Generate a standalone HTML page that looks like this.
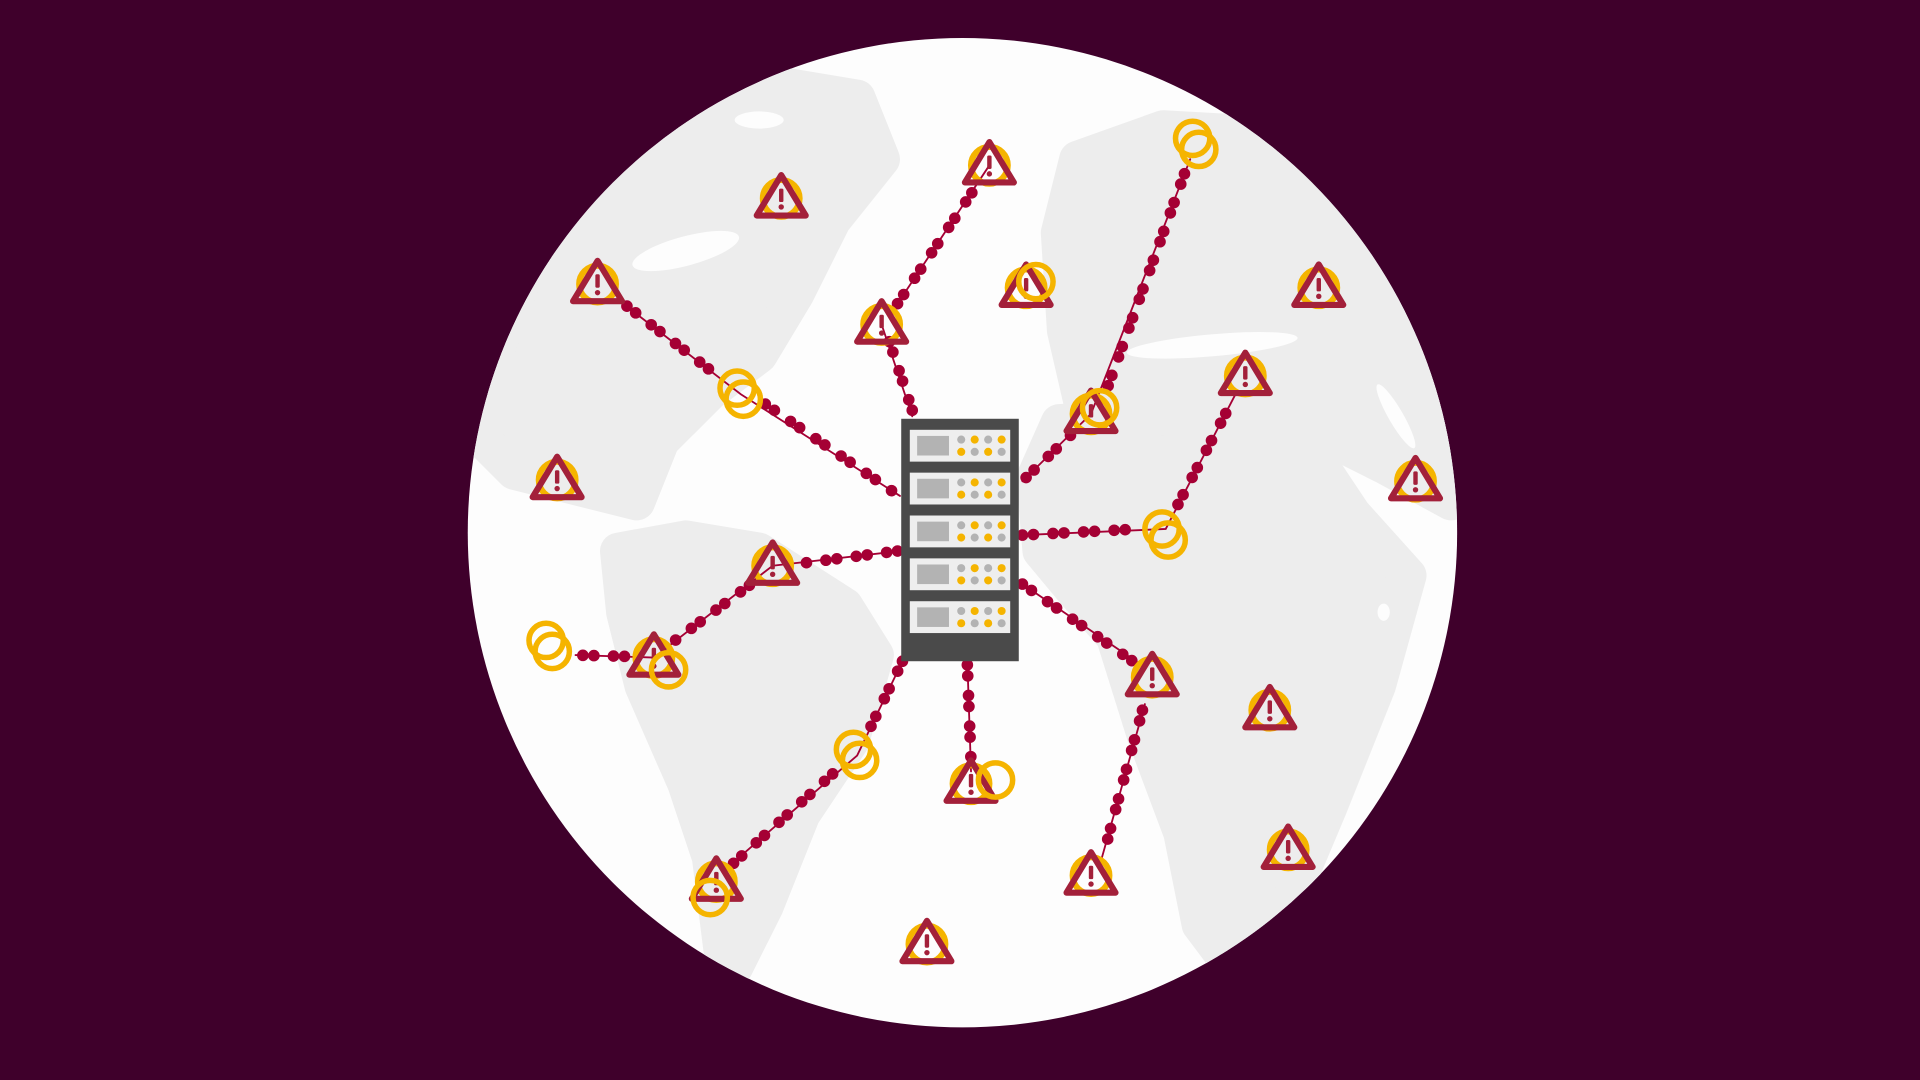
<!DOCTYPE html>
<html><head><meta charset="utf-8"><style>
html,body{margin:0;padding:0;width:1920px;height:1080px;overflow:hidden;background:#3f002b}
svg{display:block}
</style></head><body>
<svg width="1920" height="1080" viewBox="0 0 1568 882" xmlns="http://www.w3.org/2000/svg">
<defs>
<clipPath id="c"><circle cx="786" cy="435" r="404"/></clipPath>
<g id="w">
<circle cx="0" cy="0" r="15" fill="none" stroke="#f5b400" stroke-width="5"/>
<path d="M0,-19 L20,14 L-20,14 Z" fill="none" stroke="#a3203a" stroke-width="5" stroke-linejoin="round"/>
<rect x="-1.8" y="-8" width="3.6" height="11" rx="1.2" fill="#a3203a"/>
<circle cx="0" cy="7" r="2.2" fill="#a3203a"/>
</g>
<g id="r">
<circle cx="-3" cy="-5" r="14" fill="none" stroke="#f5b400" stroke-width="4.5"/>
<circle cx="2" cy="4" r="14" fill="none" stroke="#f5b400" stroke-width="4.5"/>
</g>
<g id="slot">
<rect x="0" y="0" width="82" height="26" fill="#eeeeee"/>
<rect x="6" y="5" width="26" height="16" fill="#b3b3b3"/>
<circle cx="42" cy="8" r="3.3" fill="#b3b3b3"/><circle cx="53" cy="8" r="3.3" fill="#f5b400"/><circle cx="64" cy="8" r="3.3" fill="#b3b3b3"/><circle cx="75" cy="8" r="3.3" fill="#f5b400"/>
<circle cx="42" cy="18" r="3.3" fill="#f5b400"/><circle cx="53" cy="18" r="3.3" fill="#b3b3b3"/><circle cx="64" cy="18" r="3.3" fill="#f5b400"/><circle cx="75" cy="18" r="3.3" fill="#b3b3b3"/>
</g>
</defs>
<circle cx="786" cy="435" r="404" fill="#fdfdfd"/>
<g clip-path="url(#c)" fill="#ededed" stroke="#ededed" stroke-width="30" stroke-linejoin="round">
<path d="M480,120 L560,90 L640,70 L700,80 L720,130 L680,180 L650,240 L620,290 L580,320 L540,360 L520,410 L480,400 L420,385 L395,360 L400,300 L430,220 Z"/>
<path d="M505,450 L560,440 L620,450 L690,495 L715,535 L695,605 L655,665 L625,740 L600,790 L590,780 L580,700 L560,640 L525,560 L510,500 Z"/>
<path d="M880,130 L950,105 L1040,110 L1100,150 L1160,230 L1185,320 L1185,410 L1130,380 L1060,345 L960,335 L885,335 L870,270 L865,190 Z"/>
<path d="M865,345 L960,340 L1055,345 L1105,420 L1150,470 L1125,560 L1085,660 L1045,755 L1010,795 L980,755 L965,680 L935,600 L910,520 L875,480 L850,450 L845,390 Z"/>
</g>
<g fill="#fdfdfd">
<ellipse cx="560" cy="205" rx="45" ry="12" transform="rotate(-15 560 205)"/>
<ellipse cx="620" cy="98" rx="20" ry="7"/>
<ellipse cx="990" cy="282" rx="70" ry="9" transform="rotate(-5 990 282)"/>
<ellipse cx="1140" cy="340" rx="6" ry="30" transform="rotate(-30 1140 340)"/>
<ellipse cx="1130" cy="500" rx="5" ry="7"/>
</g>
<g fill="none" stroke-linecap="round">
<g stroke="#a50034" stroke-width="1.5">
<path d="M745,340 L720,265 M733,248 L808,135"/>
<path d="M505,245 L605,322 L735,405"/>
<path d="M835,393 L891,338 L972,130"/>
<path d="M835,437 L952,432 L1010,320"/>
<path d="M735,450 L631,462 L534,537 L470,535"/>
<path d="M737,540 L700,617 L590,712"/>
<path d="M790,540 L793,630"/>
<path d="M835,477 L935,545 M935,575 L900,700"/>
</g>
<g stroke="#a50034" stroke-width="9.5" stroke-dasharray="0 9 0 16">
<path d="M745,335 L725,275"/>
<path d="M733,248 L800,148"/>
<path d="M512,250 L590,310"/>
<path d="M625,330 L730,402"/>
<path d="M838,390 L880,350"/>
<path d="M905,315 L968,140"/>
<path d="M835,437 L930,432"/>
<path d="M962,412 L1005,330"/>
<path d="M733,450 L655,460"/>
<path d="M612,478 L550,524"/>
<path d="M510,536 L468,535"/>
<path d="M737,540 L708,600"/>
<path d="M680,632 L598,706"/>
<path d="M790,543 L793,622"/>
<path d="M835,477 L925,540"/>
<path d="M933,580 L902,695"/>
</g>
</g>
<g>
<use href="#r" x="977" y="118"/><use href="#r" x="605" y="322"/><use href="#r" x="952" y="437"/><use href="#r" x="449" y="528"/><use href="#r" x="700" y="617"/>
<use href="#w" x="638" y="162"/><use href="#w" x="808" y="135"/><use href="#w" x="488" y="232"/><use href="#w" x="720" y="265"/><use href="#w" x="838" y="235"/><use href="#w" x="1077" y="235"/><use href="#w" x="1017" y="307"/><use href="#w" x="891" y="338"/><use href="#w" x="455" y="392"/><use href="#w" x="1156" y="393"/><use href="#w" x="631" y="462"/><use href="#w" x="534" y="537"/><use href="#w" x="941" y="553"/><use href="#w" x="1037" y="580"/><use href="#w" x="793" y="640"/><use href="#w" x="1052" y="694"/><use href="#w" x="891" y="715"/><use href="#w" x="585" y="720"/><use href="#w" x="757" y="771"/>
<circle cx="846" cy="230" r="14" fill="none" stroke="#f5b400" stroke-width="4.5"/>
<circle cx="898" cy="333" r="14" fill="none" stroke="#f5b400" stroke-width="4.5"/>
<circle cx="546" cy="547" r="14" fill="none" stroke="#f5b400" stroke-width="4.5"/>
<circle cx="813" cy="637" r="14" fill="none" stroke="#f5b400" stroke-width="4.5"/>
<circle cx="580" cy="733" r="14" fill="none" stroke="#f5b400" stroke-width="4.5"/>
</g>
<rect x="736" y="342" width="96" height="198" fill="#4a4a4a"/>
<use href="#slot" x="743" y="351"/><use href="#slot" x="743" y="386"/><use href="#slot" x="743" y="421"/><use href="#slot" x="743" y="456"/><use href="#slot" x="743" y="491"/>
</svg>
</body></html>
